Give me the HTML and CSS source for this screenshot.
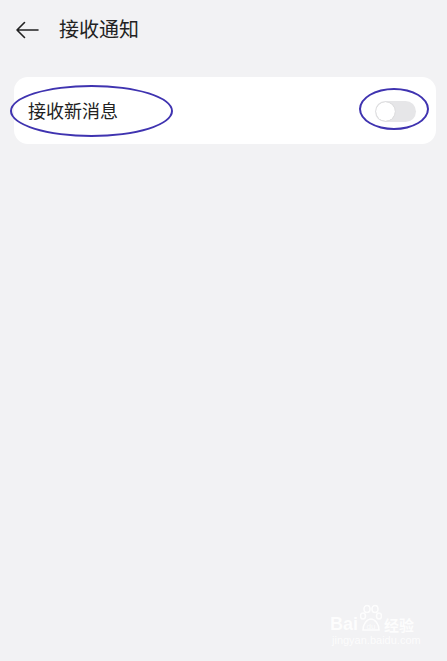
FILE: index.html
```html
<!DOCTYPE html>
<html lang="zh-CN">
<head>
    <meta charset="UTF-8">
    <meta name="viewport" content="width=device-width, initial-scale=1.0">
    <title>接收通知</title>
    <link rel="stylesheet" href="styles.css">
</head>
<body>
    <header class="topbar">
        <svg class="back" width="24" height="18" viewBox="0 0 24 18">
            <path d="M23 9H2M9.5 1.5L2 9l7.5 7.5" fill="none" stroke="#222" stroke-width="1.6" stroke-linecap="round" stroke-linejoin="round"/>
        </svg>
        <h1>接收通知</h1>
    </header>
    <main>
        <section class="card">
            <div class="label">
                <span>接收新消息</span>
                <i class="ring ring-left"></i>
            </div>
            <div class="switch-wrap">
                <div class="switch"><div class="knob"></div></div>
                <i class="ring ring-right"></i>
            </div>
        </section>
    </main>
    <div class="watermark">
        <div class="wm-top">
            <span class="wm-bai">Bai</span>
            <svg width="22" height="30" viewBox="0 0 22 30">
                <g fill="none" stroke="#fff" stroke-width="1.6">
                    <ellipse cx="7" cy="5" rx="3" ry="3.5"/>
                    <ellipse cx="15" cy="5" rx="3" ry="3.5"/>
                    <ellipse cx="3" cy="12" rx="2.5" ry="3"/>
                    <ellipse cx="19" cy="12" rx="2.5" ry="3"/>
                    <path d="M3 26c0-6 4-11 8-11s8 5 8 11z"/>
                </g>
                <text x="11" y="25" text-anchor="middle" font-size="8" font-family="Liberation Sans" fill="#fff">du</text>
            </svg>
            <span class="wm-jy">经验</span>
        </div>
        <div class="wm-url">jingyan.baidu.com</div>
    </div>
</body>
</html>
```
FILE: styles.css
```css
body{
    margin: 0;
    padding: 0;
    width: 447px;
    height: 661px;
    background-color: #f2f2f4;
    font-family: "Noto Sans CJK SC", "Noto Sans", sans-serif;
    color: #222;
    position: relative;
    overflow: hidden;
}
.topbar{
    display: flex;
    align-items: center;
    height: 58px;
    padding-left: 15px;
    gap: 20px;
}
.back{
    display: block;
    margin-top: 1px;
}
h1{
    margin: 0;
    font-size: 20px;
    font-weight: 400;
    line-height: 58px;
}
main{
    padding: 19px 11px 0 14px;
}
.card{
    background-color: #fff;
    border-radius: 14px;
    height: 67px;
    display: flex;
    align-items: center;
    justify-content: space-between;
    padding: 0 20px 0 14px;
}
.label{
    position: relative;
    font-size: 18px;
    line-height: 24px;
    margin-top: -1px;
}
.ring{
    position: absolute;
    border: 2px solid #3f33b0;
    border-radius: 50%;
    box-sizing: border-box;
}
.ring-left{
    left: -18px;
    top: -13px;
    width: 163px;
    height: 52px;
}
.switch-wrap{
    position: relative;
}
.switch{
    width: 41px;
    height: 21px;
    border-radius: 11px;
    background-color: #e6e6e8;
    position: relative;
    margin-top: 2px;
}
.knob{
    position: absolute;
    left: 1px;
    top: 1px;
    width: 19px;
    height: 19px;
    border-radius: 50%;
    background-color: #fff;
    box-shadow: 0 0 1px rgba(0,0,0,0.25);
}
.ring-right{
    left: -16px;
    top: -11px;
    width: 70px;
    height: 42px;
}
.watermark{
    position: absolute;
    left: 330px;
    top: 604px;
    color: #fff;
    opacity: 0.85;
}
.wm-top{
    display: flex;
    align-items: flex-end;
    gap: 2px;
}
.wm-bai{
    font-family: "Liberation Sans", sans-serif;
    font-weight: 700;
    font-size: 18px;
    line-height: 20px;
}
.wm-jy{
    font-size: 15px;
    line-height: 18px;
    font-weight: 700;
}
.wm-url{
    font-family: "Liberation Sans", sans-serif;
    font-size: 11px;
    line-height: 12px;
    margin-left: 2px;
}
```
